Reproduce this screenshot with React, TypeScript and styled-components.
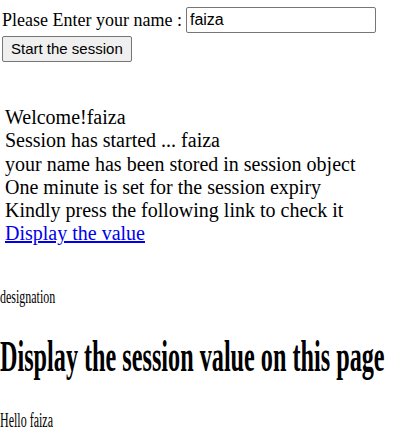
import styled, { createGlobalStyle } from "styled-components";

const GlobalStyle = createGlobalStyle`
  body {
    margin: 0;
    background: #ffffff;
    color: #000000;
    font-family: "Liberation Serif", "Times New Roman", serif;
  }
`;

const Page = styled.div`
  display: flex;
  flex-direction: column;
`;

const FormArea = styled.form`
  padding: 6px 2px 0;
  font-size: 18px;
  line-height: 28px;
`;

const FieldRow = styled.div`
  display: flex;
  align-items: center;
  gap: 4px;
`;

const NameInput = styled.input`
  width: 190px;
  height: 26px;
  box-sizing: border-box;
  border: 1px solid #767676;
  border-radius: 2px;
  padding: 1px 3px;
  font-family: "Liberation Sans", Arial, sans-serif;
  font-size: 16px;
  color: #000;
`;

const StartButton = styled.button`
  align-self: flex-start;
  height: 26px;
  margin-top: -2px;
  padding: 0 8px;
  background: #efefef;
  border: 1px solid #767676;
  border-radius: 2px;
  font-family: "Liberation Sans", Arial, sans-serif;
  font-size: 15px;
  color: #000;
`;

const Messages = styled.div`
  margin-top: 44px;
  padding-left: 5px;
  font-size: 20px;
  line-height: 23.3px;
`;

const Link = styled.a`
  color: #0000ee;
  text-decoration: underline;
`;

const Squeezed = styled.div<{ $scale: number }>`
  transform: scaleX(${(p) => p.$scale});
  transform-origin: left top;
  white-space: nowrap;
`;

const Label = styled.div`
  margin-top: 40px;
  font-size: 19px;
  line-height: 22px;
`;

const Heading = styled.h1`
  margin: 24px 0 0;
  font-size: 44px;
  line-height: 50px;
  font-weight: bold;
`;

const Greeting = styled.div`
  margin-top: 27px;
  font-size: 20px;
  line-height: 22px;
`;

export default function App() {
  return (
    <>
      <GlobalStyle />
      <Page>
        <FormArea onSubmit={(e) => e.preventDefault()}>
          <FieldRow>
            Please Enter your name :
            <NameInput defaultValue="faiza" />
          </FieldRow>
          <StartButton type="submit">Start the session</StartButton>
        </FormArea>
        <Messages>
          <div>Welcome!faiza</div>
          <div>Session has started ... faiza</div>
          <div>your name has been stored in session object</div>
          <div>One minute is set for the session expiry</div>
          <div>Kindly press the following link to check it</div>
          <Link href="#">Display the value</Link>
        </Messages>
        <Label>
          <Squeezed $scale={0.63}>designation</Squeezed>
        </Label>
        <Heading>
          <Squeezed $scale={0.55}>Display the session value on this page</Squeezed>
        </Heading>
        <Greeting>
          <Squeezed $scale={0.6}>Hello faiza</Squeezed>
        </Greeting>
      </Page>
    </>
  );
}
